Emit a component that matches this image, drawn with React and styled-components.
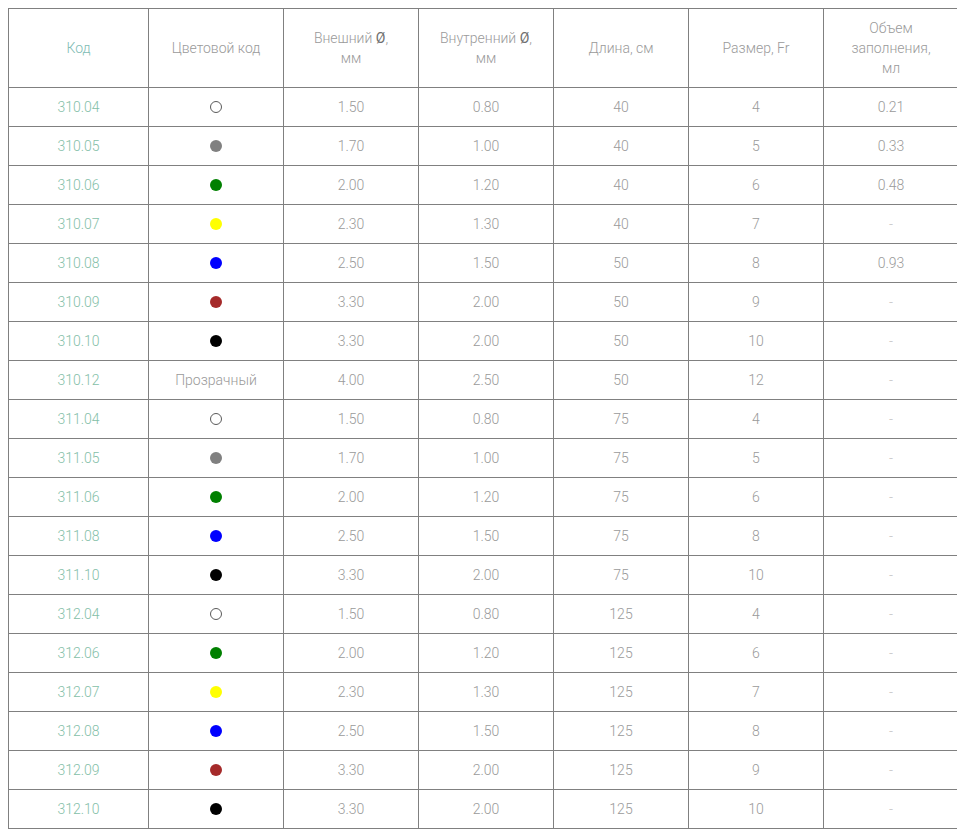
import React from "react";
import styled, { createGlobalStyle } from "styled-components";

const GlobalStyle = createGlobalStyle`
  body {
    margin: 8px;
    background: #ffffff;
    font-family: Roboto, "Open Sans", "Liberation Sans", sans-serif;
  }
`;

const Table = styled.table`
  width: 950px;
  border-collapse: collapse;
  table-layout: fixed;
  font-size: 14px;
  font-weight: 300;
  line-height: 20px;
  color: #9a9a9a;
`;

const HeadCell = styled.th`
  border: 1px solid #808080;
  padding: 9px 12px;
  height: 59px;
  font-weight: 300;
  text-align: center;
  vertical-align: middle;
  color: ${({ accent }) => (accent ? "#80bcb4" : "#9a9a9a")};
`;

const Cell = styled.td`
  border: 1px solid #808080;
  padding: 9px 8px;
  height: 20px;
  text-align: center;
  vertical-align: middle;
  color: ${({ accent, muted }) =>
    accent ? "#84c0a8" : muted ? "#c4c4c4" : "#9a9a9a"};
`;

const Diam = styled.span`
  color: #6f6f6f;
  font-weight: 400;
`;

const Dot = styled.span`
  display: block;
  margin: 0 auto;
  width: 12px;
  height: 12px;
  border-radius: 50%;
  box-sizing: border-box;
  background: ${({ color }) => color ?? "#fff"};
  border: ${({ color }) => (color ? "none" : "1px solid #5a5a5a")};
`;

const colors = {
  white: null,
  gray: "#808080",
  green: "#008000",
  yellow: "#ffff00",
  blue: "#0000ff",
  brown: "#a52a2a",
  black: "#000000",
};

const rows = [
  ["310.04", "white", "1.50", "0.80", "40", "4", "0.21"],
  ["310.05", "gray", "1.70", "1.00", "40", "5", "0.33"],
  ["310.06", "green", "2.00", "1.20", "40", "6", "0.48"],
  ["310.07", "yellow", "2.30", "1.30", "40", "7", "-"],
  ["310.08", "blue", "2.50", "1.50", "50", "8", "0.93"],
  ["310.09", "brown", "3.30", "2.00", "50", "9", "-"],
  ["310.10", "black", "3.30", "2.00", "50", "10", "-"],
  ["310.12", "clear", "4.00", "2.50", "50", "12", "-"],
  ["311.04", "white", "1.50", "0.80", "75", "4", "-"],
  ["311.05", "gray", "1.70", "1.00", "75", "5", "-"],
  ["311.06", "green", "2.00", "1.20", "75", "6", "-"],
  ["311.08", "blue", "2.50", "1.50", "75", "8", "-"],
  ["311.10", "black", "3.30", "2.00", "75", "10", "-"],
  ["312.04", "white", "1.50", "0.80", "125", "4", "-"],
  ["312.06", "green", "2.00", "1.20", "125", "6", "-"],
  ["312.07", "yellow", "2.30", "1.30", "125", "7", "-"],
  ["312.08", "blue", "2.50", "1.50", "125", "8", "-"],
  ["312.09", "brown", "3.30", "2.00", "125", "9", "-"],
  ["312.10", "black", "3.30", "2.00", "125", "10", "-"],
];

export default function App() {
  return (
    <>
      <GlobalStyle />
      <Table>
        <colgroup>
          <col style={{ width: 140 }} />
          <col style={{ width: 135 }} />
          <col style={{ width: 135 }} />
          <col style={{ width: 135 }} />
          <col style={{ width: 135 }} />
          <col style={{ width: 135 }} />
          <col style={{ width: 135 }} />
        </colgroup>
        <thead>
          <tr>
            <HeadCell accent>Код</HeadCell>
            <HeadCell>Цветовой код</HeadCell>
            <HeadCell>
              Внешний <Diam>Ø</Diam>,
              <br />
              мм
            </HeadCell>
            <HeadCell>
              Внутренний <Diam>Ø</Diam>,
              <br />
              мм
            </HeadCell>
            <HeadCell>Длина, см</HeadCell>
            <HeadCell>Размер, Fr</HeadCell>
            <HeadCell>
              Объем
              <br />
              заполнения,
              <br />
              мл
            </HeadCell>
          </tr>
        </thead>
        <tbody>
          {rows.map(([code, color, outer, inner, len, size, vol]) => (
            <tr key={code}>
              <Cell accent>{code}</Cell>
              <Cell>
                {color === "clear" ? "Прозрачный" : <Dot color={colors[color]} />}
              </Cell>
              <Cell>{outer}</Cell>
              <Cell>{inner}</Cell>
              <Cell>{len}</Cell>
              <Cell>{size}</Cell>
              <Cell muted={vol === "-"}>{vol}</Cell>
            </tr>
          ))}
        </tbody>
      </Table>
    </>
  );
}
